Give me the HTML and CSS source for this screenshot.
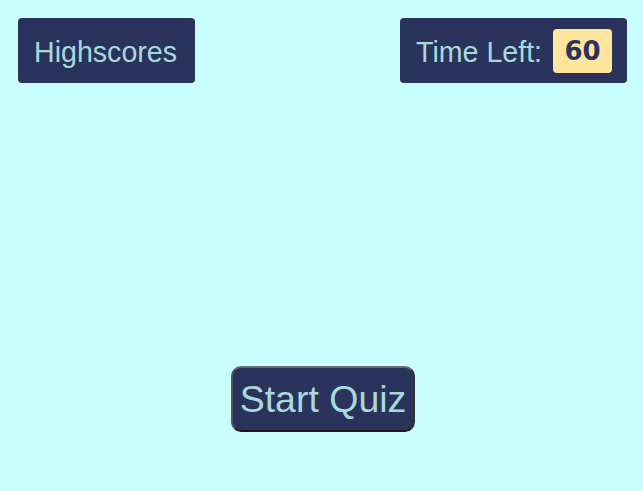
FILE: index.html
```html
<!DOCTYPE html>
<html lang="en">
<head>
<meta charset="utf-8">
<title>Quiz</title>
<link rel="stylesheet" href="styles.css">
</head>
<body>
<header class="top">
  <a class="panel highscores" href="#">Highscores</a>
  <div class="panel timer">
    <span class="timer-label">Time Left:</span>
    <span class="timer-value">60</span>
  </div>
</header>
<main class="stage">
  <button class="start" type="button">Start Quiz</button>
</main>
</body>
</html>
```

FILE: styles.css
```css
html, body {
  margin: 0;
  padding: 0;
}
body {
  background: #c9ffff;
  width: 643px;
  height: 491px;
  font-family: "Liberation Sans", Arial, sans-serif;
  display: flex;
  flex-direction: column;
}
.top {
  display: flex;
  justify-content: space-between;
  align-items: flex-start;
  padding: 18px 16px 0 18px;
}
.panel {
  background: #29335c;
  color: #a8dadc;
  border-radius: 4px;
  height: 65px;
  box-sizing: border-box;
  display: flex;
  align-items: center;
  font-size: 28.6px;
  text-decoration: none;
}
.highscores {
  width: 177px;
  padding: 3px 0 0 16px;
}
.timer {
  width: 227px;
  padding-left: 16px;
  gap: 11px;
}
.timer-label {
  padding-top: 3px;
}
.timer-value {
  background: #ffe59e;
  color: #29335c;
  border-radius: 4px;
  width: 59px;
  height: 44px;
  display: flex;
  align-items: center;
  justify-content: center;
  font-family: "DejaVu Sans", sans-serif;
  font-weight: bold;
  font-size: 26px;
}
.stage {
  display: flex;
  justify-content: center;
  padding-top: 283px;
  padding-left: 3px;
}
.start {
  background: #29335c;
  color: #a8dadc;
  font-family: "Liberation Sans", Arial, sans-serif;
  font-size: 37.5px;
  width: 184px;
  height: 66px;
  padding: 0;
  border-radius: 10px;
  border: 2px solid;
  border-color: #6a6a6a #333 #1a1a1a #555;
  cursor: pointer;
}
```
